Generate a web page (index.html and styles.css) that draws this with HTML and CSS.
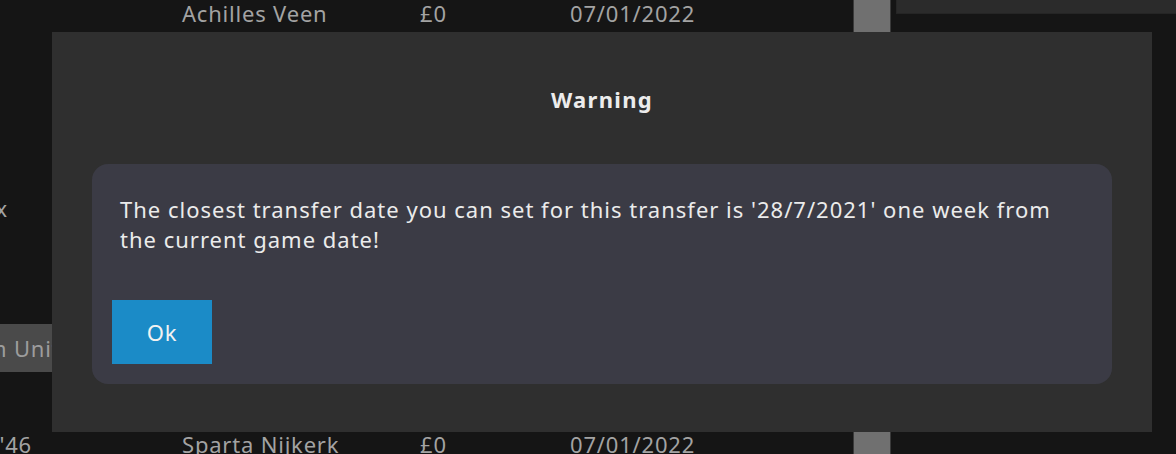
FILE: index.html
```html
<!DOCTYPE html>
<html>
<head>
<meta charset="utf-8">
<link rel="stylesheet" href="styles.css">
</head>
<body>
<div class="screen">
  <div class="list">
    <div class="row row-top">
      <span class="c-left"></span>
      <span class="c-name">Achilles Veen</span>
      <span class="c-fee">£0</span>
      <span class="c-date">07/01/2022</span>
    </div>
    <div class="row row-x">
      <span class="c-left"><span class="lbl lbl-x">Dordrecht x</span></span>
    </div>
    <div class="row row-tag">
      <span class="c-left"><span class="tag"><span class="lbl lbl-tag">Haarlem United</span></span></span>
    </div>
    <div class="row row-bottom">
      <span class="c-left"><span class="lbl lbl-46">VV '46</span></span>
      <span class="c-name">Sparta Nijkerk</span>
      <span class="c-fee">£0</span>
      <span class="c-date">07/01/2022</span>
    </div>
  </div>
  <div class="scroll">
    <div class="thumb thumb-top"></div>
    <div class="track"></div>
    <div class="thumb thumb-bottom"></div>
  </div>
  <div class="side">
    <div class="side-panel"></div>
  </div>
</div>

<div class="modal">
  <div class="modal-title">Warning</div>
  <div class="modal-box">
    <p class="modal-text">The closest transfer date you can set for this transfer is '28/7/2021' one week from the current game date!</p>
    <button class="btn-ok">Ok</button>
  </div>
</div>
</body>
</html>
```

FILE: styles.css
```css
* { box-sizing: border-box; }
html, body {
  margin: 0;
  padding: 0;
  width: 1176px;
  height: 454px;
  overflow: hidden;
  background: #151515;
  font-family: "Noto Sans", "Open Sans", sans-serif;
}
.screen {
  display: flex;
  width: 1176px;
  height: 454px;
}
.list {
  width: 853px;
  flex: none;
  display: flex;
  flex-direction: column;
  color: #a3a3a3;
  font-size: 22px;
  letter-spacing: 0.8px;
}
.row {
  display: flex;
  align-items: center;
  height: 30px;
  white-space: nowrap;
}
.row-top { margin-top: -2px; }
.row-x { margin-top: 165px; }
.row-tag { margin-top: 101px; height: 48px; }
.row-bottom { margin-top: 57px; }
.c-left {
  width: 182px;
  flex: none;
  display: flex;
  justify-content: flex-end;
  overflow: hidden;
  height: 100%;
  align-items: center;
}
.c-name { width: 238px; flex: none; }
.c-fee { width: 150px; flex: none; }
.c-date { flex: none; }
.lbl-x { margin-right: 174px; }
.lbl-46 { margin-right: 150px; }
.tag {
  display: flex;
  align-items: center;
  justify-content: flex-end;
  height: 48px;
  width: 182px;
  padding-right: 94px;
  background: #4a4a4a;
  color: #9d9d9d;
  overflow: hidden;
}
.scroll {
  width: 38px;
  flex: none;
  display: flex;
  flex-direction: column;
}
.thumb {
  background: #707070;
  border-left: 1px solid #3a3a3a;
  border-right: 1px solid #3a3a3a;
}
.thumb-top { height: 40px; }
.track { flex: 1; }
.thumb-bottom { height: 40px; }
.side {
  flex: 1;
  padding-left: 5px;
}
.side-panel {
  height: 14px;
  background: #2b2b2b;
  border-left: 1px solid #262626;
  border-bottom: 1px solid #252525;
}
.modal {
  position: absolute;
  left: 52px;
  top: 32px;
  width: 1100px;
  height: 400px;
  background: #2f2f2f;
  padding: 52px 40px 0 40px;
}
.modal-title {
  text-align: center;
  color: #ececec;
  font-weight: 700;
  font-size: 22px;
  letter-spacing: 1.3px;
  line-height: 30px;
  height: 80px;
}
.modal-box {
  background: #3b3b45;
  border-radius: 16px;
  height: 220px;
  padding: 30px 20px 20px 20px;
}
.modal-text {
  margin: 0 0 0 8px;
  color: #ebebeb;
  font-size: 22px;
  letter-spacing: 1px;
  line-height: 30px;
  height: 106px;
  max-width: 950px;
}
.btn-ok {
  display: block;
  width: 100px;
  height: 64px;
  border: none;
  background: #1b8bc7;
  color: #f2f2f2;
  font-family: inherit;
  font-size: 22px;
  letter-spacing: 0.8px;
  padding: 0;
}
```
